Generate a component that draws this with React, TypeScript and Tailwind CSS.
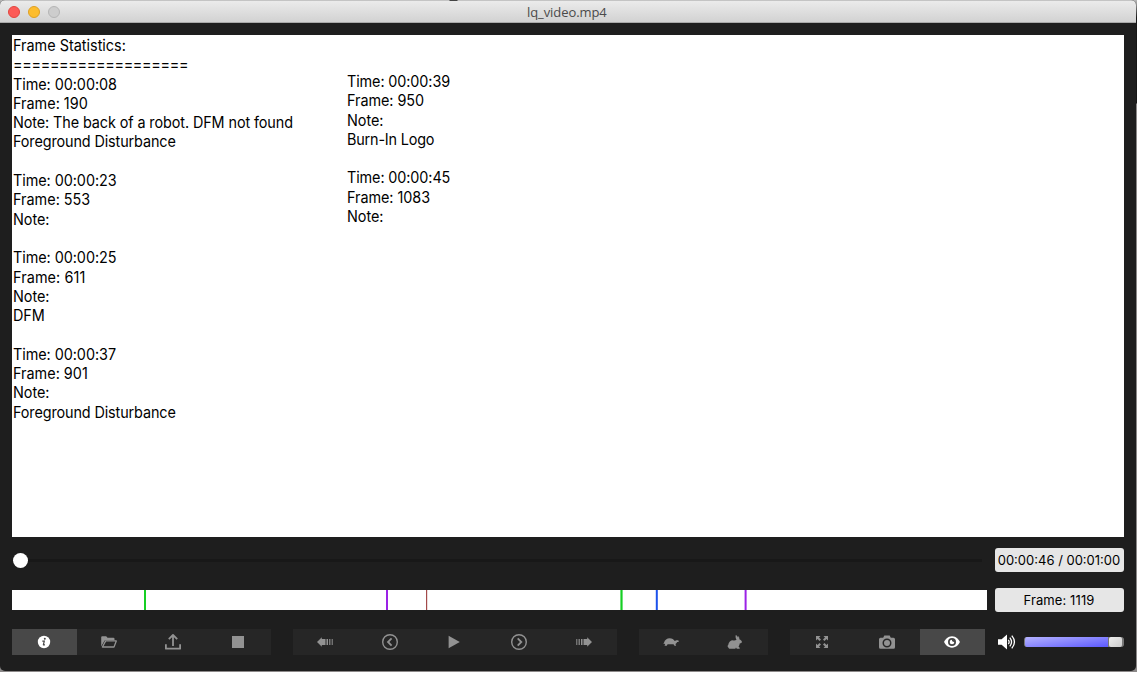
import type { ReactNode } from "react";

type Line = { text: string; spacing?: string };

const leftNotes: Line[] = [
  { text: "Frame Statistics:", spacing: "tracking-normal" },
  { text: "===================", spacing: "tracking-[-0.34px]" },
  { text: "Time: 00:00:08" },
  { text: "Frame: 190", spacing: "tracking-normal" },
  { text: "Note: The back of a robot. DFM not found", spacing: "tracking-[-0.11px]" },
  { text: "Foreground Disturbance", spacing: "tracking-[-0.13px]" },
  { text: "" },
  { text: "Time: 00:00:23" },
  { text: "Frame: 553", spacing: "tracking-normal" },
  { text: "Note:" },
  { text: "" },
  { text: "Time: 00:00:25" },
  { text: "Frame: 611", spacing: "tracking-[0.1px]" },
  { text: "Note:" },
  { text: "DFM" },
  { text: "" },
  { text: "Time: 00:00:37" },
  { text: "Frame: 901", spacing: "tracking-normal" },
  { text: "Note:" },
  { text: "Foreground Disturbance", spacing: "tracking-[-0.13px]" },
];

const rightNotes: Line[] = [
  { text: "Time: 00:00:39", spacing: "tracking-[-0.12px]" },
  { text: "Frame: 950" },
  { text: "Note:" },
  { text: "Burn-In Logo", spacing: "tracking-[-0.2px]" },
  { text: "" },
  { text: "Time: 00:00:45", spacing: "tracking-[-0.12px]" },
  { text: "Frame: 1083" },
  { text: "Note:" },
];

function Notes({ lines }: { lines: Line[] }) {
  return (
    <div className="origin-left scale-x-[0.93] whitespace-pre text-[15.5px] leading-[19.31px]">
      {lines.map((l, i) => (
        <div key={i} className="h-[19.31px]">
          <span className={l.spacing ?? "tracking-[-0.06px]"}>{l.text}</span>
        </div>
      ))}
    </div>
  );
}

function Icon({ children }: { children: ReactNode }) {
  return (
    <svg width="20" height="20" viewBox="0 0 20 20" fill="currentColor">
      {children}
    </svg>
  );
}

const InfoIcon = (
  <Icon>
    <circle cx="10" cy="10" r="6.2" />
    <circle cx="10.8" cy="6.8" r="1" fill="#484848" />
    <path d="M8.300 9.200H10.300L9.400 12.700Q9.400 13.200 10.900 12.600" fill="none" stroke="#484848" strokeWidth="1.200" />
  </Icon>
);
const FolderIcon = (
  <Icon>
    <path d="M2.200 14.600V5.200q0-1 1-1h4l1.300 1.600h6q1 0 1 1v1.400H6.600q-.9 0-1.300.8z" />
    <path d="M6.700 8.900h10.600l-2.300 6.100H3.400z" fill="none" stroke="currentColor" strokeWidth="1.300" strokeLinejoin="round" />
  </Icon>
);
const UploadIcon = (
  <Icon>
    <path d="M2.900 12.300v4.400h14.200v-4.400M10 14V3.400M5.800 7.200 10 3l4.200 4.200" fill="none" stroke="currentColor" strokeWidth="1.800" strokeLinejoin="round" />
  </Icon>
);
const StopIcon = (
  <Icon>
    <rect x="4" y="4" width="12" height="12" />
  </Icon>
);
const FastIcon = (
  <Icon>
    <path d="M18 10 13.200 5.200V7H9.500v6h3.700v1.800zM7 7h1.500v6H7zM4.600 7h1.200v6H4.600zM2.300 7h1v6h-1z" />
  </Icon>
);
const RewindIcon = (
  <Icon>
    <path d="M2 10 6.800 5.200V7h3.700v6H6.800v1.800zM11.500 7H13v6h-1.500zM14.200 7h1.200v6h-1.200zM16.700 7h1v6h-1z" />
  </Icon>
);
const PrevIcon = (
  <Icon>
    <circle cx="10" cy="10" r="7.300" fill="none" stroke="currentColor" strokeWidth="1.400" />
    <path d="M11.600 6.400 8 10l3.600 3.600" fill="none" stroke="currentColor" strokeWidth="1.800" />
  </Icon>
);
const NextIcon = (
  <Icon>
    <circle cx="10" cy="10" r="7.300" fill="none" stroke="currentColor" strokeWidth="1.400" />
    <path d="M8.700 6.400 12.300 10l-3.600 3.600" fill="none" stroke="currentColor" strokeWidth="1.800" />
  </Icon>
);
const PlayIcon = (
  <Icon>
    <path d="M4.600 3.800 15.800 10 4.600 16.200z" />
  </Icon>
);
const TurtleIcon = (
  <Icon>
    <path d="M3 10.800C3.800 7.800 5.900 6.300 8.700 6.300c2.400 0 4.200 1.100 5 2.800l1.200-.7c1-.5 2.800-.2 3 .6.100.7-.6 1-1.700 1.100-.6 1-1.100 1.600-1.800 1.800l.8 1.800h-1.700l-1-1.500H6.600l-.8 1.500H3.500l.7-1.800-2-.5z" />
  </Icon>
);
const RabbitIcon = (
  <Icon>
    <path d="M10.800 3c1.300.6 2 1.600 2.300 2.800l.2-1.900c.9 1 1.200 2.200 1 3.400 1.500.6 2.500 1.500 2.600 2.700 0 .9-1 1.300-2.200 1.400-.2 1.500-.6 2.400-1.200 3.200l1.200 1.200v.9h-2.900l-.8-1.100-.7 1.100H5.300c-1.300 0-2-.6-2.100-1.500-.8-.3-.8-1.800 0-2.100.5-3 2.700-5 5.100-4.700 1.200.1 2.400 0 3.200-.6-.8-1.500-1.200-3.100-.7-4.800z" />
  </Icon>
);
const ExpandIcon = (
  <Icon>
    <path d="M4 4h4.500L7 5.500l2 2L7.500 9l-2-2L4 8.500zM16 4v4.500L14.500 7l-2 2L11 7.500l2-2L11.500 4zM4 16v-4.500L5.500 13l2-2L9 12.500l-2 2L8.500 16zM16 16h-4.500l1.500-1.500-2-2L12.500 11l2 2 1.500-1.500z" />
  </Icon>
);
const CameraIcon = (
  <Icon>
    <path fillRule="evenodd" d="M3.500 5.700h2.700l1.100-2.100h5.400l1.100 2.100h2.700q1.500 0 1.500 1.500v8q0 1.500-1.500 1.500h-13q-1.500 0-1.500-1.500v-8q0-1.500 1.500-1.500zM10 6.500a4.500 4.500 0 1 0 0 9 4.500 4.500 0 0 0 0-9zM10 8a3 3 0 1 1 0 6 3 3 0 0 1 0-6z" />
  </Icon>
);
const EyeIcon = (
  <Icon>
    <path fillRule="evenodd" d="M10 4.300c4.200 0 7.100 3.600 7.900 5.700-.8 2.100-3.700 5.700-7.900 5.700S2.900 12.100 2.100 10C2.900 7.900 5.800 4.300 10 4.300zM10 6a4 4 0 1 0 0 8 4 4 0 0 0 0-8z" />
    <path d="M10 7.700q-.5 2.100 2.300 2.300A2.300 2.300 0 1 1 10 7.700z" />
  </Icon>
);

type Button = { label: string; icon: ReactNode; active?: boolean };

const groups: { width: string; buttons: Button[] }[] = [
  {
    width: "w-[259px]",
    buttons: [
      { label: "Info", icon: InfoIcon, active: true },
      { label: "Open", icon: FolderIcon },
      { label: "Export", icon: UploadIcon },
      { label: "Stop", icon: StopIcon },
    ],
  },
  {
    width: "w-[324px]",
    buttons: [
      { label: "Rewind", icon: RewindIcon },
      { label: "Previous", icon: PrevIcon },
      { label: "Play", icon: PlayIcon },
      { label: "Next", icon: NextIcon },
      { label: "Forward", icon: FastIcon },
    ],
  },
  {
    width: "w-[129px]",
    buttons: [
      { label: "Slower", icon: TurtleIcon },
      { label: "Faster", icon: RabbitIcon },
    ],
  },
  {
    width: "w-[195px]",
    buttons: [
      { label: "Fullscreen", icon: ExpandIcon },
      { label: "Snapshot", icon: CameraIcon },
      { label: "Show", icon: EyeIcon, active: true },
    ],
  },
];

function Toolbar() {
  return (
    <div className="flex h-[26px] gap-[22px]">
      {groups.map((g) => (
        <div key={g.width} className={`flex ${g.width}`}>
          {g.buttons.map((b) => (
            <button
              key={b.label}
              aria-label={b.label}
              className={`flex flex-1 items-center justify-center pr-px ${
                b.active ? "bg-[#484848] text-white" : "bg-[#262626] text-[#929292]"
              }`}
            >
              {b.icon}
            </button>
          ))}
        </div>
      ))}
    </div>
  );
}

function Volume() {
  return (
    <div className="flex h-[26px] items-center">
      <svg className="ml-[12px]" width="20" height="20" viewBox="0 0 20 20" fill="white">
        <path d="M1 7.300h3.600L10 2.600v14.800l-5.400-4.700H1z" />
        <path d="M11.300 7.800q1.700 2.200 0 4.400M12.800 5.600q3.500 4.400 0 8.800M14.800 3.600q5.300 6.400 0 12.800" fill="none" stroke="white" strokeWidth="1.300" />
      </svg>
      <div className="ml-[7px] flex h-[10px] w-[100px] overflow-hidden rounded-[3px] border-x border-[#777777] bg-[#777777]">
        <div className="w-[83px] bg-[linear-gradient(172deg,#b5b3ff,#5c59ff)]" />
        <div className="ml-px w-[13px] rounded-[2px] bg-linear-to-br from-[#eeeeee] to-[#cccccc]" />
      </div>
    </div>
  );
}

const markers = [
  { left: 132, width: 2, color: "#16cf24" },
  { left: 374, width: 2, color: "#9b22e6" },
  { left: 414, width: 1.2, color: "#a34a4a" },
  { left: 608.4, width: 2.2, color: "#16cf24" },
  { left: 643.8, width: 2, color: "#1c52ec" },
  { left: 732.6, width: 2, color: "#9b22e6" },
];

function Timeline() {
  return (
    <svg className="block h-5 w-[975px] bg-white" viewBox="0 0 975 20">
      {markers.map((m) => (
        <rect key={m.left} x={m.left} y="0" width={m.width} height="20" fill={m.color} />
      ))}
    </svg>
  );
}

function Readout({ children }: { children: ReactNode }) {
  return (
    <div className="flex h-6 w-[129px] items-center justify-center rounded-[3px] bg-[#e6e6e6] pt-px text-[13px] whitespace-nowrap text-black">
      {children}
    </div>
  );
}

export default function App() {
  return (
    <div className="h-[674px] w-[1141px] overflow-hidden bg-white font-['Inter','Liberation_Sans',sans-serif]">
      <div className="h-[672px] w-[1137px] bg-[linear-gradient(to_bottom,#b8b8b8_0,#161616_18px,#161616_103px,#8c8989_104px)]">
        <div className="h-[671px] w-[1136px] overflow-hidden rounded-[5px] bg-[#1e1e1e]">
          <div className="h-px bg-[linear-gradient(90deg,#c4c4c4_449px,#444444_450px,#444444_457px,#c4c4c4_458px)]" />
          <header className="flex h-[22px] items-center border-b border-b-[#aaaaaa] bg-linear-to-b from-[#ebebeb] to-[#d2d2d2] pl-2">
            <div className="flex gap-2 pt-px">
              <span className="size-3 rounded-full border border-[#e2463f] bg-[#fc5b57]" />
              <span className="size-3 rounded-full border border-[#dfa023] bg-[#fdbd2e]" />
              <span className="size-3 rounded-full border border-[#b5b5b5] bg-[#cdcdcd]" />
            </div>
            <h1 className="ml-[467px] font-['Open_Sans',sans-serif] text-[13px] leading-4 tracking-[-0.08px] text-[#4a4a4a]">lq_video.mp4</h1>
          </header>

          <main className="mt-3 ml-3 flex h-[502px] w-[1112px] bg-white pl-px text-black">
            <div className="w-[334px] pt-px">
              <Notes lines={leftNotes} />
            </div>
            <div className="pt-[37px]">
              <Notes lines={rightNotes} />
            </div>
          </main>

          <div className="mt-[11px] ml-3 flex h-6 items-center gap-2">
            <div className="flex w-[975px] items-center pl-px">
              <div className="size-[15px] rounded-full bg-white" />
              <div className="h-[3px] w-[954px] bg-[#181818]" />
            </div>
            <Readout>
              <span className="pr-px">00:00:46 / 00:01:00</span>
            </Readout>
          </div>

          <div className="mt-4 ml-3 flex h-6 items-center gap-2">
            <Timeline />
            <Readout>
              <span className="pr-px tracking-[0.1px]">Frame: 1119</span>
            </Readout>
          </div>

          <footer className="mt-[17px] ml-3 flex">
            <Toolbar />
            <Volume />
          </footer>
        </div>
      </div>
    </div>
  );
}
